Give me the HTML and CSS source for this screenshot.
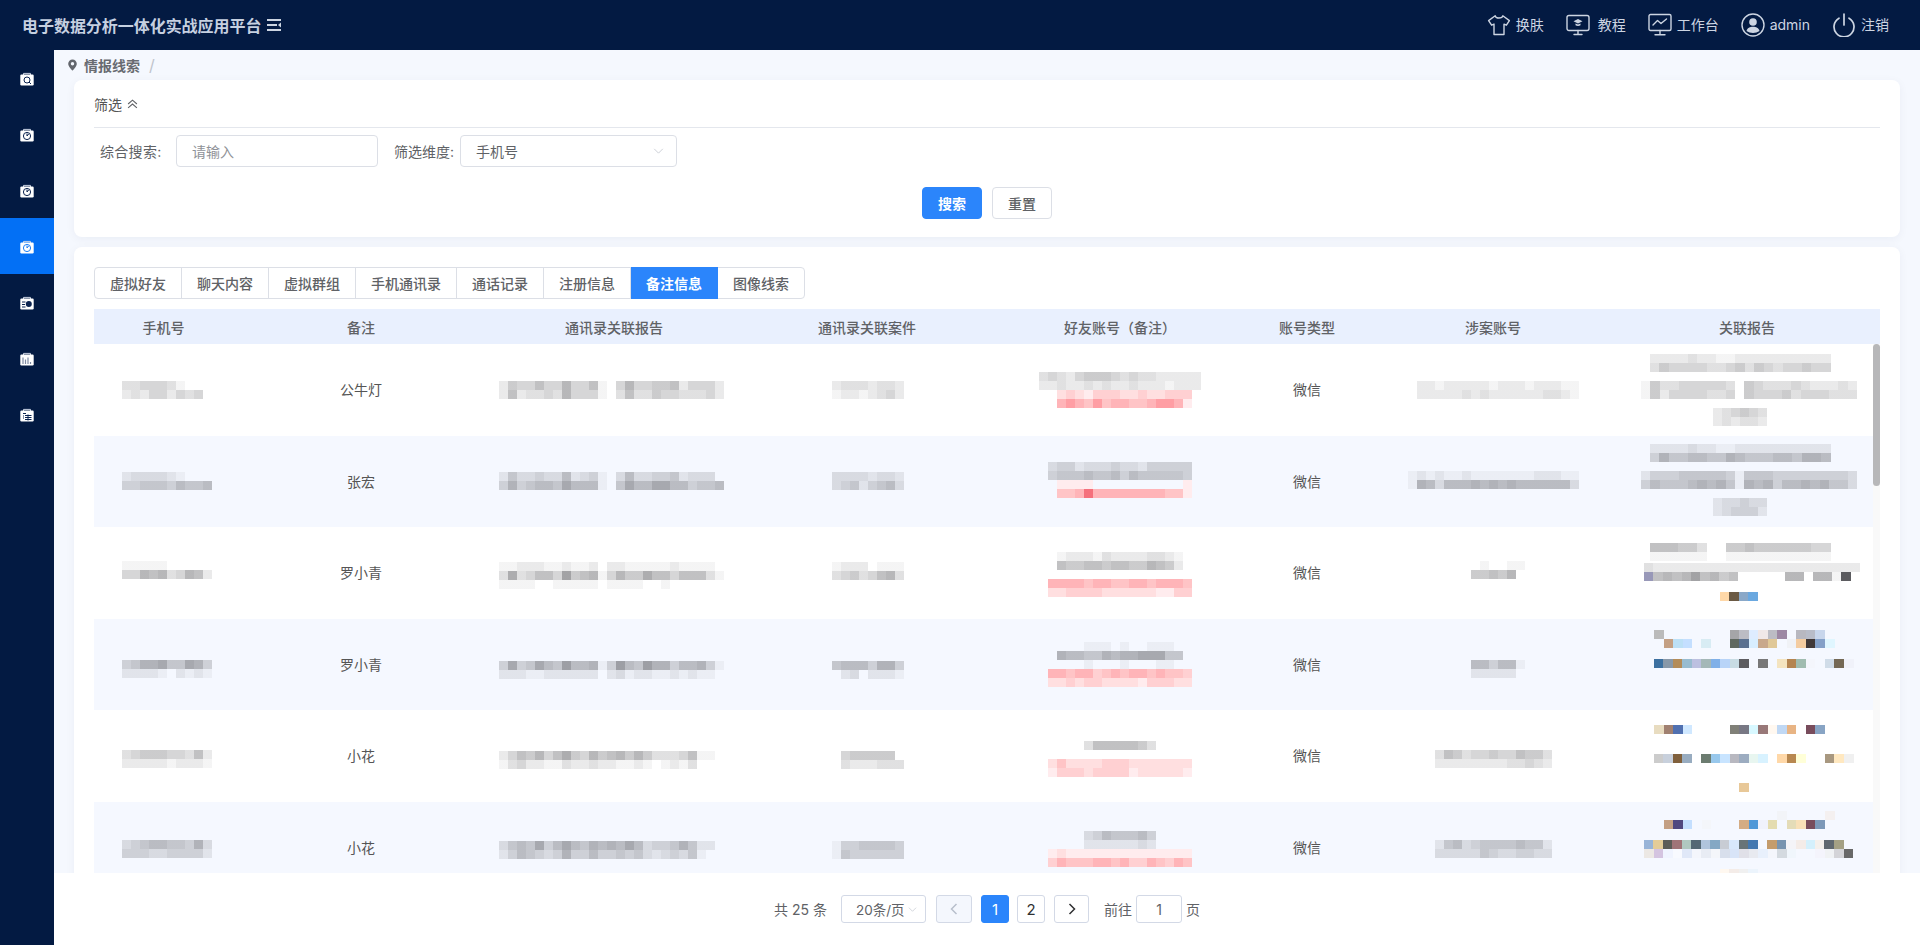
FILE: index.html
```html
<!DOCTYPE html>
<html lang="zh-CN">
<head>
<meta charset="utf-8">
<title>情报线索</title>
<link rel="stylesheet" href="styles.css">
</head>
<body>
<svg class="defs" width="0" height="0" aria-hidden="true">
  <symbol id="clip" viewBox="0 0 14 14">
    <path d="M3.5 1.4h7v2h-7z" fill="none" stroke="#c9d2e2" stroke-width="1"/>
    <rect x="0.3" y="2.6" width="13.4" height="10.9" rx="1.2" fill="#fff"/>
  </symbol>
</svg>
<header class="topbar">
  <div class="brand">
    <span class="brand-title">电子数据分析一体化实战应用平台</span>
    <svg class="burger" viewBox="0 0 14 12"><path d="M0 1h14M0 6h10M0 11h14" stroke="#cdd5e2" stroke-width="2"/><path d="M14 3.6v4.8L11 6z" fill="#cdd5e2"/></svg>
  </div>
  <nav class="topnav">
    <a class="topitem"><svg class="ticon" viewBox="0 0 24 24"><path d="M8.2 2.8 1.6 7.6l3 4.6 2.4-1.1V21.5h10V11.1l2.4 1.1 3-4.6-6.6-4.8c-.7 3-7 3-7.6 0z"/></svg><span>换肤</span></a>
    <a class="topitem wide"><svg class="ticon" viewBox="0 0 24 24"><rect x="1" y="2.5" width="22" height="15" rx="2"/><path d="M8 21.5h8M12 17.5v4"/><path class="solid" d="m12 6-4.5 2.2L12 10.400l4.500-2.200zM9.500 10.400v1.800c1.400 1 3.600 1 5 0v-1.800L12 11.600z"/></svg><span>教程</span></a>
    <a class="topitem"><svg class="ticon" viewBox="0 0 24 24"><rect x="1" y="1.500" width="22" height="16" rx="1.500"/><path d="M7 21.800h10M12 17.500v4.300"/><path d="m5 12 4.500-4.500 3.500 3 5.500-4.500"/></svg><span>工作台</span></a>
    <a class="topitem"><svg class="ticon" viewBox="0 0 24 24"><circle cx="12" cy="12" r="11"/><circle class="solid" cx="12" cy="9" r="3.800"/><path class="solid" d="M5.500 18c.8-3.200 3.400-4.200 6.500-4.200s5.700 1 6.500 4.200c-3.600 2.600-9.400 2.600-13 0z"/></svg><span>admin</span></a>
    <a class="topitem"><svg class="ticon power" viewBox="0 0 24 24"><path d="M7 5.200a10 10 0 1 0 10 0M12 1v11"/></svg><span>注销</span></a>
  </nav>
</header>
<div class="frame">
  <aside class="sidebar">
    <a class="side-item"><svg class="sicon" viewBox="0 0 14 14"><use href="#clip"/><circle cx="7" cy="8" r="3" class="ink-line"/><path class="ink-line" d="m9 10 2 2"/></svg></a>
    <a class="side-item"><svg class="sicon" viewBox="0 0 14 14"><use href="#clip"/><circle cx="7" cy="8" r="3.600" class="ink-line"/><path class="ink-line" d="M7 5.500V8l1.800-2.200"/></svg></a>
    <a class="side-item"><svg class="sicon" viewBox="0 0 14 14"><use href="#clip"/><circle cx="7" cy="8" r="3.600" class="ink-line"/><path class="ink-line" d="M7 5.500V8l1.800-2.200"/></svg></a>
    <a class="side-item active"><svg class="sicon" viewBox="0 0 14 14"><use href="#clip"/><circle cx="7" cy="8" r="3.600" class="ink-line"/><path class="ink-line" d="M7 5.500V8l1.800-2.200"/></svg></a>
    <a class="side-item"><svg class="sicon" viewBox="0 0 14 14"><use href="#clip"/><path class="ink-line" d="M2 6h3.500M2 8.500h3M2 11h3.500"/><circle cx="8.800" cy="8" r="3" class="ink-fill"/></svg></a>
    <a class="side-item"><svg class="sicon" viewBox="0 0 14 14"><use href="#clip"/><path class="ink-line thin" d="M3 5.500v6.500M5.500 7.500v4.500M8 5.500v6.500M10.500 10v2"/></svg></a>
    <a class="side-item"><svg class="sicon" viewBox="0 0 14 14"><use href="#clip"/><path class="ink-line" d="M3 5.500h3M5 7.500h6.500M5 9.500h6.500M5 11.500h6.500M8 6.500v6M3 8h1M3 10h1"/></svg></a>
  </aside>
  <main class="main">
    <div class="scroller">
      <div class="crumb">
        <svg class="pin" viewBox="0 0 12 14"><path d="M6 .5a5 5 0 0 0-5 5C1 9 6 13.500 6 13.500S11 9 11 5.500a5 5 0 0 0-5-5zm0 7a2 2 0 1 1 0-4 2 2 0 0 1 0 4z"/></svg>
        <span class="crumb-text">情报线索</span>
        <span class="crumb-sep">/</span>
      </div>
      <section class="card filter">
        <div class="filter-head">
          <span>筛选</span>
          <svg class="dbl" viewBox="0 0 10 9"><path d="m1 4.500 4-3.500 4 3.500M1 8l4-3.500L9 8"/></svg>
        </div>
        <div class="filter-form">
          <label class="flabel first">综合搜索:</label>
          <div class="field input"><span class="placeholder">请输入</span></div>
          <label class="flabel second">筛选维度:</label>
          <div class="field select"><span>手机号</span><svg class="caret" viewBox="0 0 12 7"><path d="m1 1 5 5 5-5"/></svg></div>
        </div>
        <div class="filter-actions">
          <button class="btn primary">搜索</button>
          <button class="btn">重置</button>
        </div>
      </section>
      <section class="card result">
        <div class="tabs">
          <span class="tab">虚拟好友</span><span class="tab">聊天内容</span><span class="tab">虚拟群组</span><span class="tab">手机通讯录</span><span class="tab">通话记录</span><span class="tab">注册信息</span><span class="tab on">备注信息</span><span class="tab">图像线索</span>
        </div>
        <div class="grid-head">
          <div>手机号</div><div>备注</div><div>通讯录关联报告</div><div>通讯录关联案件</div><div class="friend">好友账号（备注）</div><div>账号类型</div><div>涉案账号</div><div class="last">关联报告</div>
        </div>
        <div class="grid-body" id="gridBody">
          <div class="grid-row"><div class="mc"></div><div class="tc">公牛灯</div><div class="mc"></div><div class="mc"></div><div class="mc"></div><div class="tc">微信</div><div class="mc"></div><div class="mc"></div></div>
          <div class="grid-row"><div class="mc"></div><div class="tc">张宏</div><div class="mc"></div><div class="mc"></div><div class="mc"></div><div class="tc">微信</div><div class="mc"></div><div class="mc"></div></div>
          <div class="grid-row"><div class="mc"></div><div class="tc">罗小青</div><div class="mc"></div><div class="mc"></div><div class="mc"></div><div class="tc">微信</div><div class="mc"></div><div class="mc"></div></div>
          <div class="grid-row"><div class="mc"></div><div class="tc">罗小青</div><div class="mc"></div><div class="mc"></div><div class="mc"></div><div class="tc">微信</div><div class="mc"></div><div class="mc"></div></div>
          <div class="grid-row"><div class="mc"></div><div class="tc">小花</div><div class="mc"></div><div class="mc"></div><div class="mc"></div><div class="tc">微信</div><div class="mc"></div><div class="mc"></div></div>
          <div class="grid-row"><div class="mc"></div><div class="tc">小花</div><div class="mc"></div><div class="mc"></div><div class="mc"></div><div class="tc">微信</div><div class="mc"></div><div class="mc"></div></div>
          <div class="vbar"><div class="vthumb"></div></div>
        </div>
      </section>
    </div>
    <footer class="pager">
      <span class="total">共 25 条</span>
      <div class="pbox sizes"><span>20条/页</span><svg class="caret" viewBox="0 0 12 7"><path d="m1 1 5 5 5-5"/></svg></div>
      <div class="pbox prev"><svg class="arrow" viewBox="0 0 8 12"><path d="M6.500 1 1.500 6l5 5"/></svg></div>
      <div class="pbox num on">1</div>
      <div class="pbox num">2</div>
      <div class="pbox next"><svg class="arrow" viewBox="0 0 8 12"><path d="m1.500 1 5 5-5 5"/></svg></div>
      <span class="goto">前往</span>
      <div class="pbox jump">1</div>
      <span class="unit">页</span>
    </footer>
  </main>
</div>
<script src="mosaic.js"></script>
</body>
</html>
```
FILE: styles.css
```css
* { box-sizing: border-box; }
html, body { margin: 0; height: 100%; overflow: hidden; }
body {
  font-family: Inter, "Noto Sans CJK SC", "Noto Sans", sans-serif;
  font-size: 14px;
  color: #606266;
  background: #fff;
  display: flex;
  flex-direction: column;
}
.defs { position: absolute; }

.topbar {
  height: 50px;
  flex: none;
  background: #031a42;
  color: #cdd5e2;
  display: flex;
  align-items: center;
  justify-content: space-between;
  padding: 0 31px 0 22px;
}
.brand { display: flex; align-items: center; gap: 6px; }
.brand-title { font-size: 16px; font-weight: 700; letter-spacing: -0.04px; color: #c6d0e0; }
.burger { width: 14px; height: 12px; }
.topnav { display: flex; align-items: center; gap: 22px; }
.topitem { display: flex; align-items: center; gap: 5px; line-height: 20px; }
.topitem.wide { gap: 8px; }
.ticon { width: 24px; height: 24px; fill: none; stroke: #cdd5e2; stroke-width: 1.4; stroke-linejoin: round; stroke-linecap: round; }
.ticon .solid { fill: #cdd5e2; stroke: none; }
.ticon.power { stroke-width: 1.7; }

.frame { flex: 1; min-height: 0; display: flex; }
.sidebar { width: 54px; flex: none; background: #031a42; display: flex; flex-direction: column; }
.side-item { height: 56px; display: flex; align-items: center; justify-content: center; flex: none; }
.side-item.active { background: #0370f5; }
.sicon { width: 14px; height: 14px; margin-top: 2px; }
.ink-line { fill: none; stroke: #0b2350; stroke-width: 1; }
.ink-line.thin { stroke: #7f8ba3; stroke-width: 1.2; }
.ink-fill { fill: #0b2350; }
.side-item.active .ink-line { stroke: #1e7ff5; }

.main { flex: 1; min-width: 0; display: flex; flex-direction: column; }
.scroller { flex: 1; min-height: 0; overflow: hidden; background: #f5f8fe; padding: 0 20px; }

.crumb { height: 30px; margin-left: -7px; display: flex; align-items: center; }
.pin { width: 11px; height: 12px; fill: #63666c; margin-right: 6px; }
.crumb-text { font-weight: 600; color: #686b71; }
.crumb-sep { margin-left: 9px; color: #c0c4cc; font-size: 16px; }

.card { background: #fff; border-radius: 8px; box-shadow: 0 2px 10px rgba(20, 30, 70, .05); }
.filter { height: 157px; padding: 0 20px; margin-bottom: 10px; }
.filter-head { height: 48px; border-bottom: 1px solid #e4e7ed; display: flex; align-items: center; gap: 5px; color: #555; }
.dbl { width: 11px; height: 10px; fill: none; stroke: #606266; stroke-width: 1; }
.filter-form { display: flex; align-items: center; margin-top: 7px; }
.flabel { white-space: nowrap; }
.flabel.first { margin-left: 6px; width: 76px; letter-spacing: .3px; }
.flabel.second { margin-left: 16px; width: 66px; }
.field { height: 32px; border: 1px solid #dcdfe6; border-radius: 4px; display: flex; align-items: center; justify-content: space-between; padding: 0 15px; }
.input { width: 202px; }
.placeholder { color: #8f9298; }
.select { width: 217px; padding-right: 12px; }
.caret { width: 11px; height: 6px; fill: none; stroke: #c4c8d0; stroke-width: 1; }
.filter-actions { display: flex; justify-content: center; gap: 10px; margin-top: 20px; }
.btn { width: 60px; height: 32px; padding: 0; background: #fff; border: 1px solid #dcdfe6; border-radius: 4px; font: inherit; font-weight: 500; color: #606266; }
.btn.primary { background: #2b85fb; border-color: #2b85fb; color: #fff; font-weight: 700; }

.result { padding: 20px 20px 0; min-height: 700px; }
.tabs { display: inline-flex; height: 32px; border: 1px solid #dcdfe6; border-radius: 4px; vertical-align: top; }
.tab { padding: 0 15px; display: flex; align-items: center; border-right: 1px solid #dcdfe6; font-weight: 500; white-space: nowrap; margin-top: -1px; margin-bottom: -1px; }
.tab:last-child { border-right: 0; }
.tab.on { background: #2b85fb; color: #fff; font-weight: 700; border-right-color: #2b85fb; }
.grid-head, .grid-row { display: grid; grid-template-columns: 139px 256px 250px 256px 242px 140px 232px 271px; }
.grid-head { height: 35px; margin-top: 10px; background: #e9f0fe; align-items: center; text-align: center; font-weight: 500; }
.grid-head .last { padding-left: 5px; }
.grid-head .friend { padding-left: 8px; white-space: nowrap; }
.grid-body { position: relative; }
.grid-row { background: #fff; height: 92px; color: #555; }
.grid-row:nth-child(even) { background: #f5f8ff; height: 91px; }
.tc { display: flex; align-items: center; justify-content: center; padding-bottom: 2px; }
.mc { overflow: hidden; }
.mline { display: block; }
.vbar { position: absolute; top: 0; right: 0; bottom: 0; width: 7px; background: #f9f9f9; }
.vthumb { height: 142px; background: #b7b7b9; border-radius: 4px; }

.pager { height: 72px; flex: none; background: #fff; display: flex; align-items: center; justify-content: center; color: #606266; }
.total { width: 53px; margin-right: 14px; white-space: nowrap; }
.pbox { height: 28px; border: 1px solid #d3d9e6; border-radius: 3px; display: flex; align-items: center; justify-content: center; color: #303133; background: #fff; }
.sizes { width: 85px; justify-content: space-between; padding: 0 8px 0 14px; color: #606266; margin-right: 10px; white-space: nowrap; font-size: 13.500px; }
.sizes .caret { width: 9px; height: 5px; }
.prev { width: 36px; background: #f4f7fd; margin-right: 9px; }
.prev .arrow { stroke: #b8bfcc; }
.next { width: 35px; margin-left: 1px; margin-right: 15px; }
.num { width: 28px; margin-right: 8px; font-size: 15px; }
.num.on { background: #2b85fb; border-color: #2b85fb; color: #fff; }
.arrow { width: 8px; height: 12px; fill: none; stroke: #303133; stroke-width: 1.500; }
.goto { margin-right: 3px; width: 29px; white-space: nowrap; }
.jump { width: 46px; color: #606266; margin-right: 4px; }
```
FILE: mosaic.js
```js
var COL_X = [94, 233, 489, 739, 995, 1237, 1377, 1609];
var ROW_Y = [344, 436, 527, 619, 710, 802];
var REDS = { a: '#ffecee', b: '#ffdfe0', c: '#ffd0d2', d: '#ffc4c6', e: '#ffb4b8', f: '#ff9ea4', g: '#f5707c' };
// [row, col, x, y, cellWidth, lines]
var BLOCKS = [
  // phone
  [0,0,122,381,9,['3344431000','2324424340']],
  [1,0,122,472,9,['2333321000','4455546556']],
  [2,0,122,561,9,['1111100000','4476734762']],
  [3,0,122,660,9,['4577855874','2222102121']],
  [4,0,122,750,9,['3455544362','2222212221']],
  [5,0,122,840,9,['3456655473','4443344442']],
  // linked report
  [0,2,499,381,9,['2544644744610474455624442','2623343744410363354433342']],
  [1,2,499,472,9,['2533433623410363344523330','4745665866610586688664556']],
  [2,2,499,562,9,['1122211211202211111211110','3834664956714755866466631','1111001111101111001000000']],
  [3,2,499,661,9,['4845865966714965977466741','2221122222202312211212110']],
  [4,2,499,751,9,['246574685475675753334611','134221132232211210121300']],
  [5,2,499,841,9,['356584686576768634457522','246543474464454532343510']],
  // linked case
  [0,3,832,381,9,['23332332','12212342']],
  [1,3,832,472,9,['33332332','34524563']],
  [2,3,832,562,9,['12220111','34534673']],
  [3,3,832,661,9,['56664774','02302221']],
  [4,3,832,751,9,['04555550','03222333']],
  [5,3,832,841,9,['14455554','15444444']],
  // friend account
  [0,4,1039,372,9,['343245554343322222','223223232232221222']],
  [0,4,1057,390,9,['bcbacccbbcbbccc','efedfdeeddeffea']],
  [1,4,1048,462,9,['3442333433244444','4555655646555554']],
  [1,4,1057,480,9,['aaaa0000000000a','ddegeeeeeeeedda']],
  [2,4,1057,552,9,['12221322223321','65566566557652']],
  [2,4,1048,579,9,['eeeedeeddeedeeed','bbccccbbbbbbaacc']],
  [3,4,1057,642,9,['00011101001110','76655767788855','00010001000110']],
  [3,4,1048,669,9,['eedeecdedeededdc','bbcbccbbbbacccbb']],
  [4,4,1084,741,9,['36666653']],
  [4,4,1048,759,9,['bdbbbbcccbbbbbbb','acccbccccabbbbba']],
  [5,4,1084,831,9,['34655564','22222232']],
  [5,4,1048,849,9,['abaaaaaaaaaaaaaa','cedddeedeccedced']],
  // case account
  [0,6,1408,381,9,['0221222221222122211','0222223232222223321']],
  [1,6,1408,471,9,['1212112111111122211','1763666767676666663']],
  [2,6,1471,561,9,['010011','556570']],
  [3,6,1471,660,9,['664661','222220']],
  [4,6,1435,750,9,['3653445446553','2222222233432']],
  [5,6,1435,840,9,['2563455556552','3333354334433']],
  // related report
  [0,7,1650,354,9.5,['2222322112222222222','3544443345354344544']],
  [0,7,1641,381,9.4,['15334444430543334322232','15244443340544453444333']],
  [0,7,1713,408,9,['234543','232332']],
  [1,7,1650,444,9.5,['2222322112222222222','4755665576555665776']],
  [1,7,1641,471,9.4,['24445555541555444444443','46555676751767466767553']],
  [1,7,1713,498,9,['233433','234442']],
  [2,7,1650,543,9.5,['6665530055655555544']],
  [2,7,1650,552,9.5,['1111110011111111111']],
  [2,7,1644,563,9.4,['322222222222222222222220','#9898b8 6 7 6 7 9 6 7 5 6 0 0 0 0 0 7 7 0 7 7 1 #5c5c60']],
  [2,7,1720,592,9.5,['#ffd8a8 #6b5a44 #8aa8c8 #6aa8e0']],
  [3,7,1654,630,9.5,[
    '#bbbbbb . . . . . . . #a5a5a8 #bcbcc4 #deecff #f0e8e8 #bcbcc4 #9d88a4 . #b8b8c0 #b8bcc8 #c8d6ec',
    '. #c4a084 #bce0f6 #c4dfff . #d8ecf4 . . #5f6860 #5a7090 #d8eeff #c8a88c #e0c898 . #f0f2f6 #f4cca0 #403838 #84a0c8 #e0f6ff']],
  [3,7,1654,659,9.5,['#3c70a0 #8898a8 #b48c58 #98bcd0 #bcc0e0 #a4b8b8 #80b0e8 #b8d4f8 #c8dce4 #5c5c60 . #787878 . #f4e4c0 #b48450 #a0bcb0 #f4f6fc . #d0dce8 #746854 #f0f2fa']],
  [4,7,1654,725,9.5,['#e8dcc0 #a08070 #5070b0 #d0e8ff . . . . #808078 #787884 #d8f8ff #987878 #fff8f0 #c0d8f4 #e8b484 . #784c5c #88a4c4']],
  [4,7,1654,754,9.5,['#cccccc #c8d0dc #80603c #98acc0 . #6c7c70 #98c8ec #c8e4ff #b8b8c0 #9cacc0 #e8f6f0 #d8f2ff . #ffd8a8 #b88850 #ffffd8 . . #a89880 #ffe8c0 #f0f0f0']],
  [4,7,1654,783,9.5,['. . . . . . . . . #e8c898']],
  [5,7,1654,811,9.5,[
    '. . . . . . . . . . . . . #f2f4f8 . . . . #f4f0f0',
    '. #c4a084 #504880 #c4dfff . #f4f6fa . . . #d4ac84 #5098d8 #f0f2fc #e4dcb0 . #e4dcb8 #f8e0b8 #784c5c #7c98b8']],
  [5,7,1644,840,9.5,[
    '#98b4d8 #e4cc98 #5c5c58 #a07478 #b0c8c0 #546874 #b0c4dc #84a8c4 #c8ccd4 #d8e8fc #687478 #4478b0 . #c49c6c #7894b0 #f4f4f8 #f4ece8 #d4f0fc #f4f0ec #606870 #a4a084',
    '#ece8e4 #d4c4e0 #f0f4ff #f8faff #e0e8f8 #f4f6fc #e8ecf4 #f4f6fa #d8dfec #d8e4f8 #e0e0e8 #e8eaf0 #e8f0fc #f4f6fc #d4dae0 #f0f6fc . . #f4f4fc #f0f2f4 #d4d4d8 #686868']],
  [5,7,1720,869,9.5,['#fff8f0 #f4ece8 #f0f0f0 #ecf4fc']]
];

function tokenColor(t) {
  if (t === '.') return 'transparent';
  if (t.charAt(0) === '#') return t;
  if (REDS[t]) return REDS[t];
  return 'rgba(50,50,55,' + (Number(t) * 0.05) + ')';
}

function lineGradient(tokens, w) {
  var stops = tokens.map(function (t, i) {
    return tokenColor(t) + ' ' + (i * w) + 'px ' + ((i + 1) * w) + 'px';
  });
  return 'linear-gradient(90deg,' + stops.join(',') + ')';
}

var rows = document.querySelectorAll('.grid-row');
var cursor = {};
BLOCKS.forEach(function (b) {
  var key = b[0] + '-' + b[1];
  var cell = rows[b[0]].children[b[1]];
  var top = ROW_Y[b[0]];
  var used = cursor[key] || top;
  b[5].forEach(function (line, i) {
    var tokens = line.match(/#[0-9a-f]+|\S/g);
    var el = document.createElement('span');
    el.className = 'mline';
    el.style.height = '9px';
    el.style.marginLeft = (b[2] - COL_X[b[1]]) + 'px';
    el.style.width = (tokens.length * b[4]) + 'px';
    if (i === 0) el.style.marginTop = (b[3] - used) + 'px';
    el.style.background = lineGradient(tokens, b[4]);
    cell.appendChild(el);
  });
  cursor[key] = b[3] + b[5].length * 9;
});
```
